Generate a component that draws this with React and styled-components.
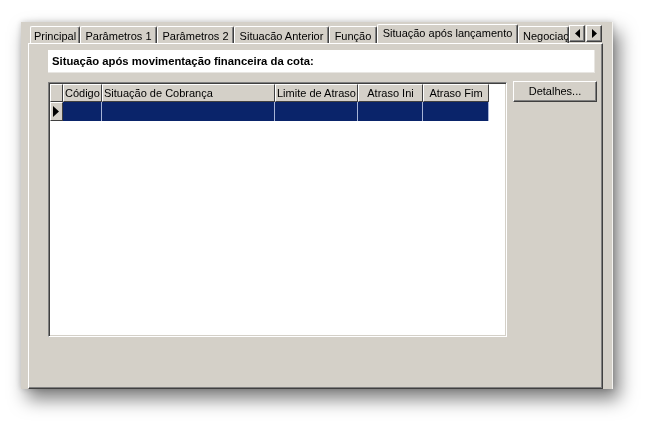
import React from 'react';
import styled, { createGlobalStyle } from 'styled-components';

const GlobalStyle = createGlobalStyle`
  html, body {
    margin: 0;
    padding: 0;
    background: #fff;
  }
  body {
    font-family: "Liberation Sans", Arial, sans-serif;
    font-size: 11px;
    color: #000;
  }
`;

const Stage = styled.div`
  padding: 22px 0 0 21px;
  height: 431px;
  box-sizing: border-box;
`;

const Window = styled.div`
  width: 592px;
  height: 367px;
  background: #d4d0c8;
  filter: drop-shadow(0 0 3px rgba(0, 0, 0, 0.18)) drop-shadow(6px 10px 9px rgba(0, 0, 0, 0.5));
  display: flex;
  flex-direction: column;
  padding: 1px 9px 0 7px;
  box-sizing: border-box;
  border-right: 1px solid #f4f3f0;
`;

const TabStrip = styled.div`
  display: flex;
  align-items: flex-end;
  height: 20px;
  padding-left: 2px;
`;

const Tab = styled.div`
  box-sizing: border-box;
  flex-shrink: 0;
  width: ${p => p.$w}px;
  height: ${p => (p.$active ? 20 : 17)}px;
  background: #d4d0c8;
  border-top: 1px solid #fff;
  border-left: 1px solid #fff;
  border-right: 1px solid #404040;
  box-shadow: inset -1px 0 0 #808080;
  border-radius: 2px 2px 0 0;
  display: flex;
  align-items: center;
  justify-content: ${p => (p.$clip ? 'flex-start' : 'center')};
  padding-bottom: ${p => (p.$active ? 3 : 0)}px;
  padding-top: ${p => (p.$active ? 0 : 1)}px;
  padding-left: ${p => (p.$clip ? 4 : 0)}px;
  white-space: nowrap;
  overflow: hidden;
  margin-bottom: ${p => (p.$active ? -1 : 0)}px;
`;

const ScrollButtons = styled.div`
  display: flex;
  align-self: flex-start;
  margin-top: 2px;
  gap: 1px;
`;

const ScrollButton = styled.div`
  box-sizing: border-box;
  width: 16px;
  height: 17px;
  background: #d4d0c8;
  border-top: 1px solid #fff;
  border-left: 1px solid #fff;
  border-right: 1px solid #404040;
  border-bottom: 1px solid #404040;
  box-shadow: inset -1px -1px 0 #808080;
  display: flex;
  align-items: center;
  justify-content: center;
`;

const Sheet = styled.div`
  flex: 1;
  box-sizing: border-box;
  border-top: 1px solid #fff;
  border-left: 1px solid #fff;
  border-right: 1px solid #404040;
  border-bottom: 1px solid #404040;
  box-shadow: inset -1px -1px 0 #808080;
  padding: 6px 6px 0 19px;
  display: flex;
  flex-direction: column;
  gap: 9px;
`;

const TitleBox = styled.div`
  box-sizing: border-box;
  width: 547px;
  height: 23px;
  background: #fff;
  border-right: 1px solid #e8e6e2;
  border-bottom: 1px solid #e8e6e2;
  font-weight: bold;
  font-size: 11.3px;
  display: flex;
  align-items: center;
  padding-left: 4px;
`;

const Body = styled.div`
  display: flex;
  align-items: flex-start;
  gap: 6px;
`;

const Grid = styled.div`
  box-sizing: border-box;
  flex-shrink: 0;
  width: 459px;
  height: 255px;
  background: #fff;
  border-top: 1px solid #808080;
  border-left: 1px solid #808080;
  border-right: 1px solid #fff;
  border-bottom: 1px solid #fff;
  box-shadow: inset 1px 1px 0 #404040, inset -1px -1px 0 #d4d0c8;
  padding: 1px 0 0 1px;
`;

const Row = styled.div`
  display: flex;
  height: ${p => p.$h}px;
`;

const HeadCell = styled.div`
  box-sizing: border-box;
  width: ${p => p.$w}px;
  height: 100%;
  background: #d4d0c8;
  border-top: 1px solid #fff;
  border-left: 1px solid #fff;
  border-right: 1px solid #404040;
  border-bottom: 1px solid #404040;
  display: flex;
  align-items: center;
  justify-content: ${p => (p.$center ? 'center' : 'flex-start')};
  padding-left: ${p => (p.$center ? 0 : 1)}px;
  white-space: nowrap;
  overflow: hidden;
`;

const Indicator = styled(HeadCell)`
  justify-content: flex-start;
  padding-left: 2px;
`;

const DataCell = styled.div`
  box-sizing: border-box;
  width: ${p => p.$w}px;
  height: 100%;
  background: #0a246a;
  border-right: 1px solid #a6b4d6;
`;

const Button = styled.div`
  box-sizing: border-box;
  flex-shrink: 0;
  width: 84px;
  height: 21px;
  margin-top: -1px;
  background: #d4d0c8;
  border-top: 1px solid #fff;
  border-left: 1px solid #fff;
  border-right: 1px solid #404040;
  border-bottom: 1px solid #404040;
  box-shadow: inset -1px -1px 0 #808080;
  display: flex;
  align-items: center;
  justify-content: center;
  padding-bottom: 2px;
`;

const Arrow = ({ dir, size = 4 }) => (
  <svg width={size + 1} height={size * 2 + 1} viewBox={`0 0 ${size + 1} ${size * 2 + 1}`}>
    {dir === 'left' ? (
      <polygon points={`${size + 1},0 ${size + 1},${size * 2 + 1} 0,${size + 0.5}`} fill="#000" />
    ) : (
      <polygon points={`0,0 0,${size * 2 + 1} ${size + 1},${size + 0.5}`} fill="#000" />
    )}
  </svg>
);

const tabs = [
  { label: 'Principal', w: 50 },
  { label: 'Parâmetros 1', w: 77 },
  { label: 'Parâmetros 2', w: 77 },
  { label: 'Situacão Anterior', w: 95 },
  { label: 'Função', w: 48 },
  { label: 'Situação após lançamento', w: 141, active: true },
  { label: 'Negociação', w: 51, clip: true },
];

const columns = [
  { label: 'Código', w: 39 },
  { label: 'Situação de Cobrança', w: 173 },
  { label: 'Limite de Atraso', w: 83 },
  { label: 'Atraso Ini', w: 65, center: true },
  { label: 'Atraso Fim', w: 66, center: true },
];

export default function App() {
  return (
    <Stage>
      <GlobalStyle />
      <Window>
        <TabStrip>
          {tabs.map(t => (
            <Tab key={t.label} $w={t.w} $active={t.active} $clip={t.clip}>
              {t.label}
            </Tab>
          ))}
          <ScrollButtons>
            <ScrollButton><Arrow dir="left" /></ScrollButton>
            <ScrollButton><Arrow dir="right" /></ScrollButton>
          </ScrollButtons>
        </TabStrip>
        <Sheet>
          <TitleBox>Situação após movimentação financeira da cota:</TitleBox>
          <Body>
            <Grid>
              <Row $h={18}>
                <HeadCell $w={13} />
                {columns.map(c => (
                  <HeadCell key={c.label} $w={c.w} $center={c.center}>
                    {c.label}
                  </HeadCell>
                ))}
              </Row>
              <Row $h={19}>
                <Indicator $w={13}><Arrow dir="right" size={5} /></Indicator>
                {columns.map(c => (
                  <DataCell key={c.label} $w={c.w} />
                ))}
              </Row>
            </Grid>
            <Button>Detalhes...</Button>
          </Body>
        </Sheet>
      </Window>
    </Stage>
  );
}
